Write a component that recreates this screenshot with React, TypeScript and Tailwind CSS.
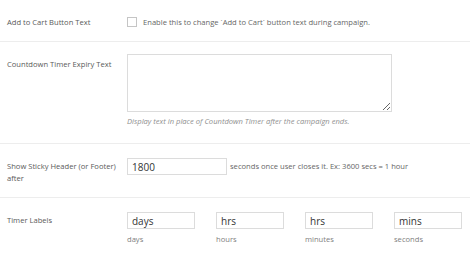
const font = { fontFamily: '"Open Sans", "Noto Sans", sans-serif' };

const timerLabels = [
  { value: "days", label: "days" },
  { value: "hrs", label: "hours" },
  { value: "hrs", label: "minutes" },
  { value: "mins", label: "seconds" },
];

function Row({ label, height, children }: { label: React.ReactNode; height: string; children: React.ReactNode }) {
  return (
    <div className={`flex border-b border-[#ededed] ${height}`}>
      <div className="w-[127px] shrink-0 pl-[7px] pr-1 pt-[16px] text-[7.6px] leading-[12px] text-[#5a5a5a]">{label}</div>
      <div className="flex-1">{children}</div>
    </div>
  );
}

export default function App() {
  return (
    <div className="h-[261px] w-[470px] overflow-hidden bg-white" style={font}>
      <Row label="Add to Cart Button Text" height="h-[42px]">
        <label className="flex items-center gap-[6px] pt-[16px] text-[7.6px] leading-[12px] text-[#666]">
          <span className="h-[10px] w-[10px] shrink-0 border border-[#c5c5c5] bg-white" />
          Enable this to change `Add to Cart` button text during campaign.
        </label>
      </Row>

      <Row label="Countdown Timer Expiry Text" height="h-[102px]">
        <div className="pt-[12px]">
          <textarea className="block h-[58px] w-[265px] resize border border-[#dcdcdc] bg-white outline-none" />
          <p className="mt-[3px] text-[7.6px] italic leading-[12px] text-[#8f8f8f]">
            Display text in place of Countdown Timer after the campaign ends.
          </p>
        </div>
      </Row>

      <Row label={<>Show Sticky Header (or Footer)<br />after</>} height="h-[54px]">
        <div className="flex items-center gap-[3px] pt-[14px]">
          <input
            defaultValue="1800"
            className="h-[17px] w-[100px] border border-[#dcdcdc] px-[4px] text-[10px] text-[#333] outline-none"
          />
          <span className="text-[7.6px] text-[#666]">seconds once user closes it. Ex: 3600 secs = 1 hour</span>
        </div>
      </Row>

      <div className="flex">
        <div className="w-[127px] shrink-0 pl-[7px] pt-[16px] text-[7.6px] leading-[12px] text-[#5a5a5a]">Timer Labels</div>
        <div className="flex gap-[21px] pt-[14px]">
          {timerLabels.map((t) => (
            <div key={t.label} className="flex flex-col">
              <input
                defaultValue={t.value}
                className="h-[17px] w-[68px] border border-[#dcdcdc] px-[4px] text-[10px] text-[#333] outline-none"
              />
              <span className="mt-[4px] text-[7.6px] leading-[12px] text-[#808080]">{t.label}</span>
            </div>
          ))}
        </div>
      </div>
    </div>
  );
}
